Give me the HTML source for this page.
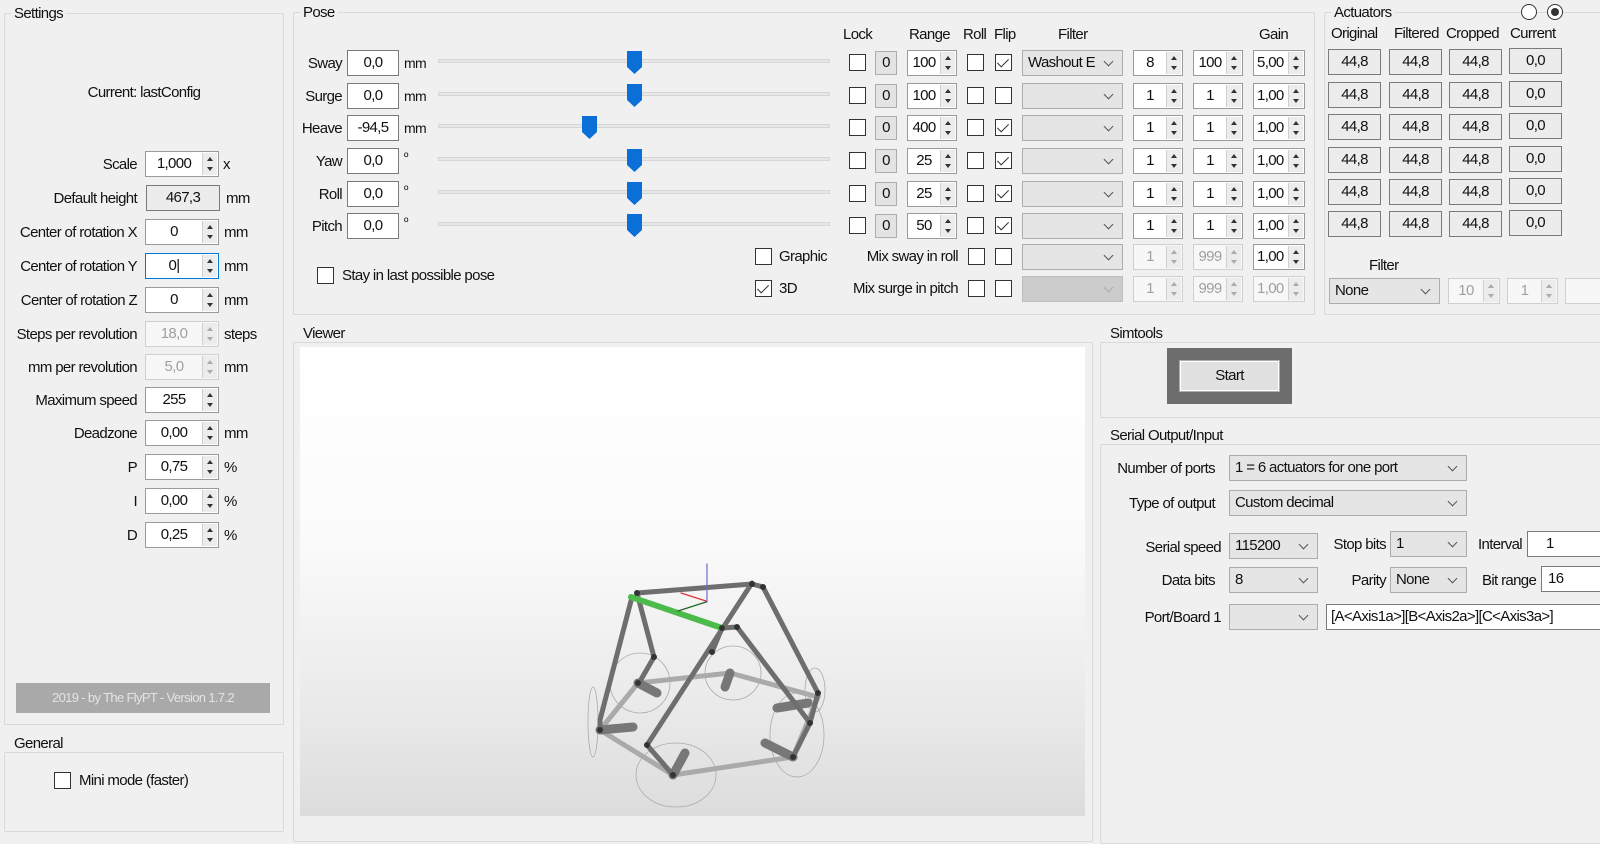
<!DOCTYPE html>
<html><head><meta charset="utf-8">
<style>
*{box-sizing:border-box}
body{margin:0;width:1600px;height:816px;background:#f0f0f0;font:15px "Liberation Sans",sans-serif;color:#111;position:relative;overflow:hidden;letter-spacing:-0.65px}
.a{position:absolute;white-space:nowrap}
.r{position:absolute;white-space:nowrap;text-align:right}
.g{position:absolute;border:1px solid #d9d9d9;border-radius:2px}
.gt{position:absolute;background:#f0f0f0;padding:0 3px;white-space:nowrap}
.tb{position:absolute;background:#fff;border:1px solid #7a7a7a;height:26px;line-height:24px;text-align:center}
.sp{position:absolute;background:#fff;border:1px solid #9a9a9a;height:26px;line-height:24px;text-align:center;padding-right:16px}
.sp i{position:absolute;right:1px;top:1px;bottom:1px;width:15px;background:#ececec;border-left:1px solid #d0d0d0}
.sp i:before{content:"";position:absolute;left:4px;top:4px;border:3.5px solid transparent;border-bottom:4px solid #333;border-top:0}
.sp i:after{content:"";position:absolute;left:4px;bottom:4px;border:3.5px solid transparent;border-top:4px solid #333;border-bottom:0}
.sp.d{color:#a0a0a0;border-color:#cfcfcf;background:#f7f7f7}
.sp.d i:before{border-bottom-color:#aaa}.sp.d i:after{border-top-color:#aaa}
.cb{position:absolute;width:17px;height:17px;background:#fff;border:1px solid #333}
.cb.k:after{content:"";position:absolute;left:4px;top:1px;width:5px;height:10px;border:solid #333;border-width:0 1.5px 1.5px 0;transform:rotate(45deg)}
.cmb{position:absolute;background:#e5e5e5;border:1px solid #adadad;height:26px;line-height:24px;padding-left:5px}
.cmb:after{content:"";position:absolute;right:10px;top:7px;width:6px;height:6px;border:solid #555;border-width:0 1px 1px 0;transform:rotate(45deg)}
.cmb.d{background:#cccccc;border-color:#bdbdbd}
.cmb.d:after{border-color:#aaa}
.z{position:absolute;background:#e3e3e3;border:1px solid #adadad;width:22px;height:24px;line-height:22px;text-align:center}
.ac{position:absolute;background:#ececec;border:1px solid #7a7a7a;height:26px;line-height:24px;text-align:center;width:53px}
.trk{position:absolute;left:438px;width:392px;height:4px;background:#e7e7e7;border:1px solid #d6d6d6}
</style></head><body>

<!-- Settings -->
<div class="g" style="left:4px;top:13px;width:280px;height:712px"></div>
<div class="gt" style="left:11px;top:5px">Settings</div>
<div class="a" style="left:0;width:288px;text-align:center;top:84px">Current: lastConfig</div>

<div class="r" style="right:1463px;top:156px">Scale</div>
<div class="sp" style="left:145px;top:151px;width:74px">1,000<i></i></div><div class="a" style="left:223px;top:156px">x</div>
<div class="r" style="right:1463px;top:190px">Default height</div>
<div class="tb" style="left:146px;top:185px;width:74px;background:#ececec">467,3</div><div class="a" style="left:226px;top:190px">mm</div>
<div class="r" style="right:1463px;top:224px">Center of rotation X</div>
<div class="sp" style="left:145px;top:219px;width:74px">0<i></i></div><div class="a" style="left:224px;top:224px">mm</div>
<div class="r" style="right:1463px;top:258px">Center of rotation Y</div>
<div class="sp" style="left:145px;top:253px;width:74px;border-color:#0078d7">0|<i></i></div><div class="a" style="left:224px;top:258px">mm</div>
<div class="r" style="right:1463px;top:292px">Center of rotation Z</div>
<div class="sp" style="left:145px;top:287px;width:74px">0<i></i></div><div class="a" style="left:224px;top:292px">mm</div>
<div class="r" style="right:1463px;top:326px">Steps per revolution</div>
<div class="sp d" style="left:145px;top:321px;width:74px">18,0<i></i></div><div class="a" style="left:224px;top:326px">steps</div>
<div class="r" style="right:1463px;top:359px">mm per revolution</div>
<div class="sp d" style="left:145px;top:354px;width:74px">5,0<i></i></div><div class="a" style="left:224px;top:359px">mm</div>
<div class="r" style="right:1463px;top:392px">Maximum speed</div>
<div class="sp" style="left:145px;top:387px;width:74px">255<i></i></div>
<div class="r" style="right:1463px;top:425px">Deadzone</div>
<div class="sp" style="left:145px;top:420px;width:74px">0,00<i></i></div><div class="a" style="left:224px;top:425px">mm</div>
<div class="r" style="right:1463px;top:459px">P</div>
<div class="sp" style="left:145px;top:454px;width:74px">0,75<i></i></div><div class="a" style="left:224px;top:459px">%</div>
<div class="r" style="right:1463px;top:493px">I</div>
<div class="sp" style="left:145px;top:488px;width:74px">0,00<i></i></div><div class="a" style="left:224px;top:493px">%</div>
<div class="r" style="right:1463px;top:527px">D</div>
<div class="sp" style="left:145px;top:522px;width:74px">0,25<i></i></div><div class="a" style="left:224px;top:527px">%</div>

<div class="a" style="left:16px;top:683px;width:254px;height:30px;background:#a9a9a9;color:#e4e4e4;text-align:center;line-height:30px;font-size:13px">2019 - by The FlyPT - Version 1.7.2</div>

<div class="g" style="left:4px;top:752px;width:280px;height:80px"></div>
<div class="gt" style="left:11px;top:735px">General</div>
<div class="cb" style="left:54px;top:772px"></div><div class="a" style="left:79px;top:772px">Mini mode (faster)</div>

<!-- Pose -->
<div class="g" style="left:293px;top:12px;width:1022px;height:303px"></div>
<div class="gt" style="left:300px;top:4px">Pose</div>
<div class="a" style="left:843px;top:26px">Lock</div>
<div class="a" style="left:909px;top:26px">Range</div>
<div class="a" style="left:963px;top:26px">Roll</div>
<div class="a" style="left:994px;top:26px">Flip</div>
<div class="a" style="left:1058px;top:26px">Filter</div>
<div class="a" style="left:1259px;top:26px">Gain</div>

<div class="r" style="right:1258px;top:55px">Sway</div><div class="tb" style="left:347px;top:50px;width:52px">0,0</div><div class="a" style="left:404px;top:55px;font-size:14px">mm</div>
<div class="trk" style="top:59px"></div>
<div class="r" style="right:1258px;top:88px">Surge</div><div class="tb" style="left:347px;top:83px;width:52px">0,0</div><div class="a" style="left:404px;top:88px;font-size:14px">mm</div>
<div class="trk" style="top:92px"></div>
<div class="r" style="right:1258px;top:120px">Heave</div><div class="tb" style="left:347px;top:115px;width:52px">-94,5</div><div class="a" style="left:404px;top:120px;font-size:14px">mm</div>
<div class="trk" style="top:124px"></div>
<div class="r" style="right:1258px;top:153px">Yaw</div><div class="tb" style="left:347px;top:148px;width:52px">0,0</div><div class="a" style="left:404px;top:150px;font-size:12px">º</div>
<div class="trk" style="top:157px"></div>
<div class="r" style="right:1258px;top:186px">Roll</div><div class="tb" style="left:347px;top:181px;width:52px">0,0</div><div class="a" style="left:404px;top:183px;font-size:12px">º</div>
<div class="trk" style="top:190px"></div>
<div class="r" style="right:1258px;top:218px">Pitch</div><div class="tb" style="left:347px;top:213px;width:52px">0,0</div><div class="a" style="left:404px;top:215px;font-size:12px">º</div>
<div class="trk" style="top:222px"></div>

<svg class="a" style="left:0;top:0" width="1600" height="320">
<defs><path id="t" d="M0 0H15V16L7.5 23L0 16Z" fill="#0a6fd6"/></defs>
<use href="#t" x="627" y="51"/><use href="#t" x="627" y="84"/><use href="#t" x="582" y="116"/>
<use href="#t" x="627" y="149"/><use href="#t" x="627" y="182"/><use href="#t" x="627" y="214"/>
</svg>

<div class="cb" style="left:849px;top:54px"></div><div class="z" style="left:875px;top:51px">0</div><div class="sp" style="left:907px;top:50px;width:50px">100<i></i></div><div class="cb" style="left:967px;top:54px"></div><div class="cb k" style="left:995px;top:54px"></div>
<div class="cmb" style="left:1022px;top:50px;width:101px">Washout E</div><div class="sp" style="left:1133px;top:50px;width:50px">8<i></i></div><div class="sp" style="left:1193px;top:50px;width:50px">100<i></i></div><div class="sp" style="left:1253px;top:50px;width:52px;text-align:left;padding-left:3px">5,00<i></i></div>

<div class="cb" style="left:849px;top:87px"></div><div class="z" style="left:875px;top:84px">0</div><div class="sp" style="left:907px;top:83px;width:50px">100<i></i></div><div class="cb" style="left:967px;top:87px"></div><div class="cb" style="left:995px;top:87px"></div>
<div class="cmb" style="left:1022px;top:83px;width:101px"></div><div class="sp" style="left:1133px;top:83px;width:50px">1<i></i></div><div class="sp" style="left:1193px;top:83px;width:50px">1<i></i></div><div class="sp" style="left:1253px;top:83px;width:52px;text-align:left;padding-left:3px">1,00<i></i></div>

<div class="cb" style="left:849px;top:119px"></div><div class="z" style="left:875px;top:116px">0</div><div class="sp" style="left:907px;top:115px;width:50px">400<i></i></div><div class="cb" style="left:967px;top:119px"></div><div class="cb k" style="left:995px;top:119px"></div>
<div class="cmb" style="left:1022px;top:115px;width:101px"></div><div class="sp" style="left:1133px;top:115px;width:50px">1<i></i></div><div class="sp" style="left:1193px;top:115px;width:50px">1<i></i></div><div class="sp" style="left:1253px;top:115px;width:52px;text-align:left;padding-left:3px">1,00<i></i></div>

<div class="cb" style="left:849px;top:152px"></div><div class="z" style="left:875px;top:149px">0</div><div class="sp" style="left:907px;top:148px;width:50px">25<i></i></div><div class="cb" style="left:967px;top:152px"></div><div class="cb k" style="left:995px;top:152px"></div>
<div class="cmb" style="left:1022px;top:148px;width:101px"></div><div class="sp" style="left:1133px;top:148px;width:50px">1<i></i></div><div class="sp" style="left:1193px;top:148px;width:50px">1<i></i></div><div class="sp" style="left:1253px;top:148px;width:52px;text-align:left;padding-left:3px">1,00<i></i></div>

<div class="cb" style="left:849px;top:185px"></div><div class="z" style="left:875px;top:182px">0</div><div class="sp" style="left:907px;top:181px;width:50px">25<i></i></div><div class="cb" style="left:967px;top:185px"></div><div class="cb k" style="left:995px;top:185px"></div>
<div class="cmb" style="left:1022px;top:181px;width:101px"></div><div class="sp" style="left:1133px;top:181px;width:50px">1<i></i></div><div class="sp" style="left:1193px;top:181px;width:50px">1<i></i></div><div class="sp" style="left:1253px;top:181px;width:52px;text-align:left;padding-left:3px">1,00<i></i></div>

<div class="cb" style="left:849px;top:217px"></div><div class="z" style="left:875px;top:214px">0</div><div class="sp" style="left:907px;top:213px;width:50px">50<i></i></div><div class="cb" style="left:967px;top:217px"></div><div class="cb k" style="left:995px;top:217px"></div>
<div class="cmb" style="left:1022px;top:213px;width:101px"></div><div class="sp" style="left:1133px;top:213px;width:50px">1<i></i></div><div class="sp" style="left:1193px;top:213px;width:50px">1<i></i></div><div class="sp" style="left:1253px;top:213px;width:52px;text-align:left;padding-left:3px">1,00<i></i></div>

<div class="cb" style="left:755px;top:248px"></div><div class="a" style="left:779px;top:248px">Graphic</div>
<div class="r" style="right:642px;top:248px">Mix sway in roll</div><div class="cb" style="left:968px;top:248px"></div><div class="cb" style="left:995px;top:248px"></div>
<div class="cmb" style="left:1022px;top:244px;width:101px"></div><div class="sp d" style="left:1133px;top:244px;width:50px">1<i></i></div><div class="sp d" style="left:1193px;top:244px;width:50px">999<i></i></div><div class="sp" style="left:1253px;top:244px;width:52px;text-align:left;padding-left:3px">1,00<i></i></div>

<div class="cb k" style="left:755px;top:280px"></div><div class="a" style="left:779px;top:280px">3D</div>
<div class="r" style="right:642px;top:280px">Mix surge in pitch</div><div class="cb" style="left:968px;top:280px"></div><div class="cb" style="left:995px;top:280px"></div>
<div class="cmb d" style="left:1022px;top:276px;width:101px"></div><div class="sp d" style="left:1133px;top:276px;width:50px">1<i></i></div><div class="sp d" style="left:1193px;top:276px;width:50px">999<i></i></div><div class="sp d" style="left:1253px;top:276px;width:52px;text-align:left;padding-left:3px">1,00<i></i></div>

<div class="cb" style="left:317px;top:267px"></div><div class="a" style="left:342px;top:267px">Stay in last possible pose</div>

<!-- Actuators -->
<div class="g" style="left:1324px;top:12px;width:290px;height:303px"></div>
<div class="gt" style="left:1331px;top:4px">Actuators</div>
<div class="a" style="left:1521px;top:4px;width:16px;height:16px;border:1px solid #333;border-radius:50%;background:#fff"></div>
<div class="a" style="left:1547px;top:4px;width:16px;height:16px;border:1px solid #333;border-radius:50%;background:#fff"><div class="a" style="left:3px;top:3px;width:8px;height:8px;border-radius:50%;background:#333"></div></div>
<div class="a" style="left:1331px;top:25px">Original</div>
<div class="a" style="left:1394px;top:25px">Filtered</div>
<div class="a" style="left:1446px;top:25px">Cropped</div>
<div class="a" style="left:1510px;top:25px">Current</div>

<div class="ac" style="left:1328px;top:49px">44,8</div><div class="ac" style="left:1389px;top:49px">44,8</div><div class="ac" style="left:1449px;top:49px">44,8</div><div class="ac" style="left:1509px;top:48px">0,0</div>
<div class="ac" style="left:1328px;top:82px">44,8</div><div class="ac" style="left:1389px;top:82px">44,8</div><div class="ac" style="left:1449px;top:82px">44,8</div><div class="ac" style="left:1509px;top:81px">0,0</div>
<div class="ac" style="left:1328px;top:114px">44,8</div><div class="ac" style="left:1389px;top:114px">44,8</div><div class="ac" style="left:1449px;top:114px">44,8</div><div class="ac" style="left:1509px;top:113px">0,0</div>
<div class="ac" style="left:1328px;top:147px">44,8</div><div class="ac" style="left:1389px;top:147px">44,8</div><div class="ac" style="left:1449px;top:147px">44,8</div><div class="ac" style="left:1509px;top:146px">0,0</div>
<div class="ac" style="left:1328px;top:179px">44,8</div><div class="ac" style="left:1389px;top:179px">44,8</div><div class="ac" style="left:1449px;top:179px">44,8</div><div class="ac" style="left:1509px;top:178px">0,0</div>
<div class="ac" style="left:1328px;top:211px">44,8</div><div class="ac" style="left:1389px;top:211px">44,8</div><div class="ac" style="left:1449px;top:211px">44,8</div><div class="ac" style="left:1509px;top:210px">0,0</div>
<div class="a" style="left:1369px;top:257px">Filter</div>
<div class="cmb" style="left:1329px;top:278px;width:111px">None</div>
<div class="sp d" style="left:1448px;top:278px;width:52px">10<i></i></div>
<div class="sp d" style="left:1507px;top:278px;width:51px">1<i></i></div>
<div class="sp d" style="left:1565px;top:278px;width:50px"></div>

<!-- Viewer -->
<div class="g" style="left:293px;top:342px;width:800px;height:500px"></div>
<div class="gt" style="left:300px;top:325px">Viewer</div>
<div class="a" style="left:300px;top:347px;width:785px;height:469px;background:linear-gradient(#ffffff 0%,#fbfbfb 40%,#e8e8e8 80%,#dcdcdc 100%)"></div>
<svg class="a" style="left:0;top:0" width="1100" height="816" fill="none" stroke-linecap="round">
<g stroke="#aaa" stroke-width="0.8">
<ellipse cx="640" cy="683" rx="30" ry="30"/><ellipse cx="733" cy="673" rx="28" ry="27"/><ellipse cx="676" cy="775" rx="40" ry="32"/><ellipse cx="797" cy="735" rx="27" ry="42"/><ellipse cx="593" cy="722" rx="5" ry="35"/><ellipse cx="815" cy="690" rx="10" ry="22"/>
</g>
<g stroke="#aaaaaa" stroke-width="5">
<polyline points="600,730 673,775 793,757 818,697 730,673 638,683 600,730"/>
</g>
<g stroke="#777" stroke-width="9">
<line x1="638" y1="683" x2="657" y2="693"/><line x1="600" y1="730" x2="633" y2="727"/><line x1="673" y1="775" x2="685" y2="753"/><line x1="793" y1="757" x2="765" y2="743"/><line x1="730" y1="673" x2="725" y2="687"/><line x1="808" y1="703" x2="777" y2="708"/>
</g>
<g stroke="#6e6e6e" stroke-width="5">
<line x1="637" y1="593" x2="752" y2="584"/>
<polyline points="632,597 600,720 600,730"/>
<polyline points="637,593 654,657 639,683"/>
<polyline points="752,583 647,745 673,775"/>
<polyline points="763,587 818,693 810,723 793,757"/>
<line x1="737" y1="627" x2="810" y2="723"/>
<line x1="722" y1="628" x2="712" y2="652"/>
<line x1="722" y1="628" x2="737" y2="627"/>
<line x1="752" y1="584" x2="763" y2="587"/>
</g>
<line x1="631" y1="597" x2="722" y2="628" stroke="#4cbb4c" stroke-width="6"/>
<line x1="707" y1="564" x2="707" y2="602" stroke="#6b6bd8" stroke-width="1.2"/>
<line x1="681" y1="593" x2="706" y2="601" stroke="#d33" stroke-width="1.2"/>
<line x1="678" y1="611" x2="706" y2="602" stroke="#262" stroke-width="1.2"/>
<g fill="#333" stroke="none">
<circle cx="637" cy="593" r="3"/><circle cx="752" cy="584" r="3"/><circle cx="763" cy="587" r="3"/><circle cx="722" cy="628" r="3"/><circle cx="737" cy="627" r="3"/><circle cx="654" cy="657" r="3"/><circle cx="638" cy="683" r="3"/><circle cx="600" cy="730" r="3"/><circle cx="673" cy="775" r="3"/><circle cx="793" cy="757" r="3"/><circle cx="810" cy="723" r="3"/><circle cx="818" cy="693" r="3"/><circle cx="647" cy="745" r="3"/><circle cx="712" cy="652" r="3"/>
</g>
</svg>

<!-- Simtools -->
<div class="g" style="left:1100px;top:342px;width:520px;height:76px"></div>
<div class="gt" style="left:1107px;top:325px">Simtools</div>
<div class="a" style="left:1167px;top:348px;width:125px;height:56px;background:#6d6d6d"></div>
<div class="a" style="left:1180px;top:361px;width:99px;height:30px;background:#e1e1e1;border:1px solid #fff;outline:1px solid #adadad;text-align:center;line-height:28px">Start</div>

<!-- Serial -->
<div class="g" style="left:1100px;top:444px;width:520px;height:400px"></div>
<div class="gt" style="left:1107px;top:427px">Serial Output/Input</div>
<div class="r" style="right:385px;top:460px">Number of ports</div>
<div class="cmb" style="left:1229px;top:455px;width:238px">1 = 6 actuators for one port</div>
<div class="r" style="right:385px;top:495px">Type of output</div>
<div class="cmb" style="left:1229px;top:490px;width:238px">Custom decimal</div>
<div class="r" style="right:379px;top:539px">Serial speed</div>
<div class="cmb" style="left:1229px;top:533px;width:89px">115200</div>
<div class="r" style="right:214px;top:536px">Stop bits</div>
<div class="cmb" style="left:1390px;top:531px;width:77px">1</div>
<div class="a" style="left:1478px;top:536px">Interval</div>
<div class="tb" style="left:1527px;top:531px;width:80px;text-align:left;padding-left:18px">1</div>
<div class="r" style="right:385px;top:572px">Data bits</div>
<div class="cmb" style="left:1229px;top:567px;width:89px">8</div>
<div class="r" style="right:214px;top:572px">Parity</div>
<div class="cmb" style="left:1390px;top:567px;width:77px">None</div>
<div class="a" style="left:1482px;top:572px">Bit range</div>
<div class="tb" style="left:1541px;top:566px;width:70px;text-align:left;padding-left:6px">16</div>
<div class="r" style="right:379px;top:609px">Port/Board 1</div>
<div class="cmb" style="left:1229px;top:604px;width:89px"></div>
<div class="tb" style="left:1326px;top:604px;width:290px;text-align:left;padding-left:4px">[A&lt;Axis1a&gt;][B&lt;Axis2a&gt;][C&lt;Axis3a&gt;]</div>

</body></html>
